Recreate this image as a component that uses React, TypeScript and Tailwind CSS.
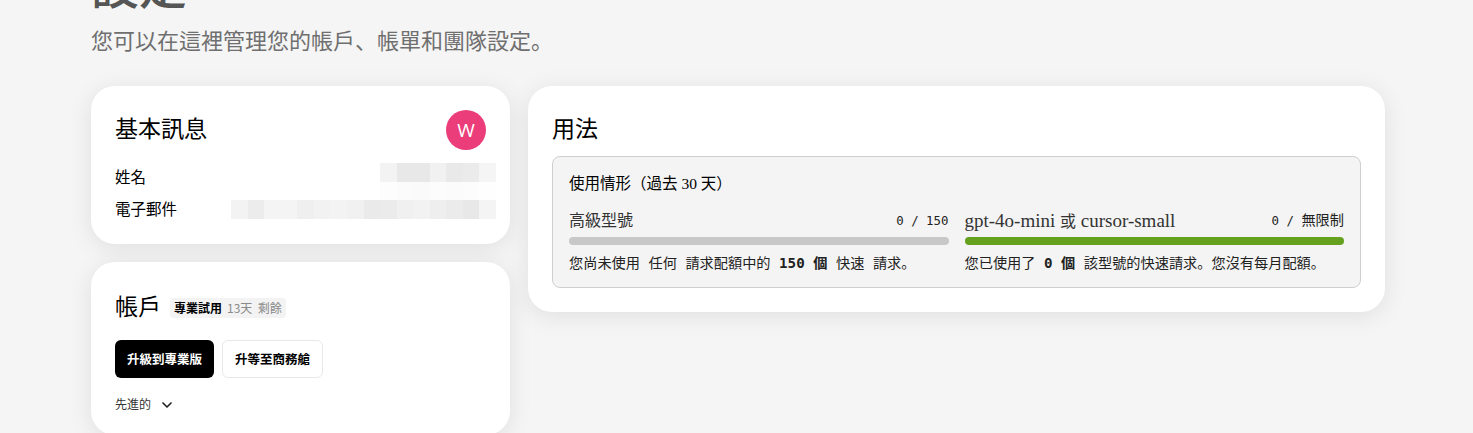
const serif = "font-['Liberation_Serif','Noto_Sans_CJK_JP',serif]";
const mono = "font-['DejaVu_Sans_Mono','Noto_Sans_CJK_JP',monospace]";
const card = "rounded-[24px] bg-white shadow-[0_4px_24px_rgba(0,0,0,0.09)]";
const R1 = ["#f3f3f3","#e8e8e8","#e8e8e8","#f1f1f1","#e9e9e9","#ebebeb","#f5f5f5"];
const R1b = ["#fdfdfd","#fbfbfb","#fafafa","#fcfcfc","#fbfbfb","#fcfcfc","#fefefe"];
const R2 = ["#f3f3f3","#ececec","#f4f4f4","#f4f4f4","#efefef","#f2f2f2","#f3f3f3","#f1f1f1","#eaeaea","#ebebeb","#f0f0f0","#f2f2f2","#eeeeee","#ebebeb","#e8e8e8","#f4f4f4"];

function Blur({ colors, className }: { colors: string[]; className: string }) {
  return (
    <div className={"flex " + className}>
      {colors.map((c, i) => (
        <div key={i} className="flex-1" style={{ background: c }} />
      ))}
    </div>
  );
}

export default function App() {
  return (
    <div className="h-[433px] w-[1473px] overflow-hidden bg-[#f5f5f5] font-['Noto_Sans_CJK_JP',sans-serif]">
      <div className="-mt-[36px] pl-[91px]">
        <h1 className={serif + " text-[48px] leading-[48px] font-medium text-[#555]"}>設定</h1>
        <p className="mt-[11px] text-[22px] leading-[33px] text-[#6f6f6f]">您可以在這裡管理您的帳戶、帳單和團隊設定。</p>
        <div className="mt-[30px] flex items-start gap-[18px]">
          <div className="flex w-[419px] shrink-0 flex-col gap-[18px]">
            <section className={card + " h-[158px] px-[24px] pt-[24px]"}>
              <div className="flex h-[40px] items-center justify-between">
                <h2 className={serif + " text-[23px] text-black"}>基本訊息</h2>
                <div className="flex h-[40px] w-[40px] items-center justify-center rounded-full bg-[#ea3d79] font-['Open_Sans',sans-serif] text-[19px] text-white">W</div>
              </div>
              <div className={serif + " mt-[11px] flex h-[32px] items-start justify-between text-[15.5px] leading-[32px] text-black"}>
                <span className="translate-y-[1px]">姓名</span>
                <div className="relative mt-[2px] -mr-[10px] w-[116px]">
                  <Blur colors={R1} className="h-[19px]" />
                  <Blur colors={R1b} className="absolute top-full right-0 left-0 h-[18px]" />
                </div>
              </div>
              <div className={serif + " flex h-[32px] items-start justify-between text-[15.5px] leading-[32px] text-black"}>
                <span className="translate-y-[1px]">電子郵件</span>
                <Blur colors={R2} className="mt-[7px] -mr-[10px] h-[19px] w-[265px]" />
              </div>
            </section>
            <section className={card + " h-[173px] px-[24px] pt-[28px]"}>
              <div className="flex items-center gap-[9px]">
                <h2 className={serif + " text-[23px] leading-[36px] text-black"}>帳戶</h2>
                <span className="flex h-[20px] items-center gap-[5px] rounded-[4px] bg-[#f3f3f3] px-[4px] text-[12px]">
                  <b className="font-bold text-black">專業試用</b>
                  <span className="text-[#8a8a8a]">13天&nbsp; 剩餘</span>
                </span>
              </div>
              <div className="mt-[14px] flex gap-[8px]">
                <button className="h-[38px] w-[99px] rounded-[6px] bg-black text-[12.5px] font-bold text-white">升級到專業版</button>
                <button className="h-[38px] w-[101px] rounded-[6px] border border-[#e8e8e8] bg-white text-[12.5px] font-bold text-black">升等至商務艙</button>
              </div>
              <div className="mt-[18px] flex items-center gap-[8px] text-[12px] text-[#333]">
                <span className={serif}>先進的</span>
                <svg width="16" height="16" viewBox="0 0 24 24" fill="none" stroke="#222" strokeWidth="2.5" strokeLinecap="round" strokeLinejoin="round"><path d="m6 9 6 6 6-6" /></svg>
              </div>
            </section>
          </div>
          <section className={card + " h-[226px] w-[857px] shrink-0 p-[24px]"}>
            <h2 className={serif + " text-[23px] leading-[40px] text-black"}>用法</h2>
            <div className="mt-[6px] h-[132px] rounded-[8px] border border-[#cfcfcf] bg-[#f4f4f4] px-[16px] pt-[15px]">
              <div className={serif + " text-[15.5px] leading-[24px] text-black"}>使用情形（過去 30 天）</div>
              <div className="mt-[13px] grid grid-cols-2 gap-[16px]">
                <div>
                  <div className="flex h-[24px] items-center justify-between">
                    <span className={serif + " text-[16px] leading-[24px] text-[#333]"}>高級型號</span>
                    <span className={mono + " text-[12.4px] text-[#222]"}>0 / 150</span>
                  </div>
                  <div className="mt-[4px] h-[8px] rounded-full bg-[#c8c8c8]" />
                  <p className={mono + " mt-[8px] text-[14.2px] leading-[20px] text-[#222]"}>您尚未使用 任何 請求配額中的 <b>150 個</b> 快速 請求。</p>
                </div>
                <div>
                  <div className="flex h-[24px] items-center justify-between">
                    <span className={serif + " text-[19px] leading-[24px] text-[#333]"}>gpt-4o-mini <span className="text-[16px]">或</span> cursor-small</span>
                    <span className={mono + " text-[12.4px] text-[#222]"}>0 / <span className="text-[14.2px]">無限制</span></span>
                  </div>
                  <div className="mt-[4px] h-[8px] rounded-full bg-[#65a11e]" />
                  <p className={mono + " mt-[8px] text-[14.2px] leading-[20px] text-[#222]"}>您已使用了 <b>0 個</b> 該型號的快速請求。您沒有每月配額。</p>
                </div>
              </div>
            </div>
          </section>
        </div>
      </div>
    </div>
  );
}
